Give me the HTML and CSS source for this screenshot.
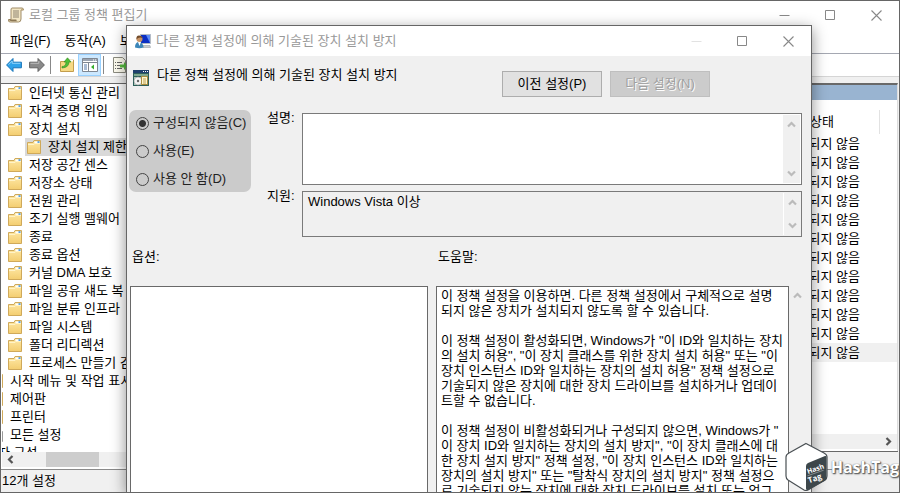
FILE: index.html
```
<!DOCTYPE html>
<html lang="ko">
<head>
    <meta charset="UTF-8">
    <meta name="viewport" content="width=device-width, initial-scale=1.0">
    <title>로컬 그룹 정책 편집기</title>
    <link rel="stylesheet" href="styles.css">
</head>
<body>

<!-- Shared icons -->
<svg class="sprite" width="0" height="0">
    <linearGradient id="folderFill" x1="0" y1="0" x2="0" y2="1">
        <stop offset="0" stop-color="#ffe9a6"/>
        <stop offset="1" stop-color="#f3cd70"/>
    </linearGradient>
    <symbol id="folder" viewBox="0 0 14 14">
        <path d="M.5 13.500V2.500h5.500l1-2h6.500v13z" fill="url(#folderFill)" stroke="#cfa95a"/>
        <path d="M7.500 1.500h5v2h-5z" fill="#fff"/>
        <path d="M10.500 1.300h2v1.500h-2z" fill="#2f8be0"/>
        <path d="M1 4.500h6l1-1h5" fill="none" stroke="#fff3c8"/>
    </symbol>
    <symbol id="min" viewBox="0 0 11 11"><path d="M.5 5.500h10" stroke="currentColor"/></symbol>
    <symbol id="max" viewBox="0 0 11 11"><path d="M.5.5h9v9h-9z" fill="none" stroke="currentColor"/></symbol>
    <symbol id="close" viewBox="0 0 11 11"><path d="M.5.5l10 10M10.500.5l-10 10" stroke="currentColor" stroke-width="1.100"/></symbol>
    <symbol id="up" viewBox="0 0 9 9"><path d="M1 6.500l3.500-3.500 3.500 3.500" fill="none" stroke="currentColor" stroke-width="2.200"/></symbol>
    <symbol id="down" viewBox="0 0 9 9"><path d="M1 2.500l3.500 3.500 3.500-3.500" fill="none" stroke="currentColor" stroke-width="2.200"/></symbol>
    <symbol id="left" viewBox="0 0 9 9"><path d="M6.500 1l-3.500 3.500 3.500 3.500" fill="none" stroke="currentColor" stroke-width="2.200"/></symbol>
    <symbol id="right" viewBox="0 0 9 9"><path d="M2.500 1l3.500 3.500-3.500 3.500" fill="none" stroke="currentColor" stroke-width="2.200"/></symbol>
</svg>

<div class="window">
    <!-- Title bar -->
    <header class="titlebar">
        <svg class="app-icon" viewBox="0 0 16 16">
            <path d="M4 1h10q1.500 0 1.500 2H13v9q0 3-2.500 3H2Q0 15 .5 12.500h2.500V3Q3 1 4 1z" fill="#f2e6c4" stroke="#a08c68"/>
            <path d="M13 3.500V2q1-1.500 2.500 1z" fill="#c3ad80"/>
            <path d="M.8 13q1 1.500 8 1.200l-.5-1.700H.8z" fill="#8a7654"/>
            <path d="M5 4h6M5 6h6M5 8h6M5 10h6" stroke="#8d8371"/>
        </svg>
        <h1>로컬 그룹 정책 편집기</h1>
        <div class="win-buttons">
            <button aria-label="최소화"><svg><use href="#min"/></svg></button>
            <button aria-label="최대화"><svg><use href="#max"/></svg></button>
            <button aria-label="닫기"><svg><use href="#close"/></svg></button>
        </div>
    </header>

    <!-- Menu -->
    <nav class="menubar">
        <button>파일(F)</button>
        <button>동작(A)</button>
        <button>보기</button>
    </nav>

    <!-- Toolbar -->
    <div class="toolbar">
        <button aria-label="뒤로">
            <svg viewBox="0 0 16 16"><path d="M.6 8L7 1.500v3.700h8.400v5.600H7v3.700z" fill="#2fa3ea" stroke="#1874b8"/><path d="M2.500 7.700L6.200 4v2.300h8.200" fill="none" stroke="#90d4fa"/></svg>
        </button>
        <button aria-label="앞으로">
            <svg viewBox="0 0 16 16"><path d="M15.400 8L9 1.500v3.700H.6v5.600H9v3.700z" fill="#8a8a8a" stroke="#626262"/><path d="M1.500 6.300h8.300V4" fill="none" stroke="#bbb"/></svg>
        </button>
        <span class="sep"></span>
        <button aria-label="한 수준 위로">
            <svg viewBox="0 0 16 16"><path d="M1.500 14.500V4.500h6l1-1.500h6v11.500z" fill="#f6d985" stroke="#c39d4c"/><path d="M10 2.500h4v2h-4z" fill="#fff"/><path d="M3 9.500q4 0 4-4.500H5L8.500.8 12 5h-2q0 5.500-7 6z" fill="#4fbd36" stroke="#2f8b20" stroke-width=".6"/></svg>
        </button>
        <button class="active" aria-label="트리 표시">
            <svg viewBox="0 0 16 16"><path d="M.5 1.500h15v13H.5z" fill="#fff" stroke="#7f8792"/><path d="M1 2h14v2H1z" fill="#9aa3b0"/><path d="M11 3h1m1 0h1" stroke="#fff"/><path d="M1 5.500h14M6.500 6v8" stroke="#7f8792"/><path d="M2 8h3M2 10h3M2 12h3" stroke="#5378ab"/><path d="M12 7.500v5L9 10z" fill="#38ae2c"/></svg>
        </button>
        <span class="sep"></span>
        <button aria-label="목록 내보내기">
            <svg viewBox="0 0 16 16"><path d="M1.500.5h9l3 3v12h-12z" fill="#fffdf0" stroke="#8c8c80"/><path d="M3 5.500h1m1 0h5M3 8.500h1m1 0h4M3 11.500h1m1 0h5" stroke="#666"/><path d="M8 7.500h4V5l4 4-4 4v-2.500H8z" fill="#57bd3f"/></svg>
        </button>
    </div>

    <!-- Tree and setting list -->
    <main class="workarea">
        <section class="tree-pane">
            <ul class="tree">
                <li class="l1"><svg><use href="#folder"/></svg>인터넷 통신 관리</li>
                <li class="l1"><svg><use href="#folder"/></svg>자격 증명 위임</li>
                <li class="l1"><svg><use href="#folder"/></svg>장치 설치</li>
                <li class="l2"><span class="selected"><svg><use href="#folder"/></svg>장치 설치 제한</span></li>
                <li class="l1"><svg><use href="#folder"/></svg>저장 공간 센스</li>
                <li class="l1"><svg><use href="#folder"/></svg>저장소 상태</li>
                <li class="l1"><svg><use href="#folder"/></svg>전원 관리</li>
                <li class="l1"><svg><use href="#folder"/></svg>조기 실행 맬웨어</li>
                <li class="l1"><svg><use href="#folder"/></svg>종료</li>
                <li class="l1"><svg><use href="#folder"/></svg>종료 옵션</li>
                <li class="l1"><svg><use href="#folder"/></svg>커널 DMA 보호</li>
                <li class="l1"><svg><use href="#folder"/></svg>파일 공유 섀도 복</li>
                <li class="l1"><svg><use href="#folder"/></svg>파일 분류 인프라</li>
                <li class="l1"><svg><use href="#folder"/></svg>파일 시스템</li>
                <li class="l1"><svg><use href="#folder"/></svg>폴더 리디렉션</li>
                <li class="l1"><svg><use href="#folder"/></svg>프로세스 만들기 감</li>
                <li class="l0"><svg><use href="#folder"/></svg>시작 메뉴 및 작업 표시</li>
                <li class="l0"><svg><use href="#folder"/></svg>제어판</li>
                <li class="l0"><svg><use href="#folder"/></svg>프린터</li>
                <li class="l0"><svg viewBox="0 0 14 14"><path d="M4.500 3.500h9v10h-9z" fill="#fff" stroke="#999"/><path d="M6 6.500h7M6 8.500h7M6 10.500h7" stroke="#999"/></svg>모든 설정</li>
                <li>사용자 구성</li>
            </ul>
            <div class="hscroll">
                <svg><use href="#left"/></svg>
                <span class="thumb"></span>
            </div>
        </section>

        <section class="list-pane">
            <div class="list-box">
                <div class="list-banner"></div>
                <table class="settings">
                    <thead>
                        <tr><th>상태</th></tr>
                    </thead>
                    <tbody>
                        <tr><td>구성되지 않음</td></tr>
                        <tr><td>구성되지 않음</td></tr>
                        <tr><td>구성되지 않음</td></tr>
                        <tr><td>구성되지 않음</td></tr>
                        <tr><td>구성되지 않음</td></tr>
                        <tr><td>구성되지 않음</td></tr>
                        <tr><td>구성되지 않음</td></tr>
                        <tr><td>구성되지 않음</td></tr>
                        <tr><td>구성되지 않음</td></tr>
                        <tr><td>구성되지 않음</td></tr>
                        <tr><td>구성되지 않음</td></tr>
                        <tr class="current"><td>구성되지 않음</td></tr>
                    </tbody>
                </table>
                <div class="hscroll end"><svg><use href="#right"/></svg></div>
            </div>
            <div class="tabs"></div>
        </section>
    </main>

    <footer class="statusbar">12개 설정</footer>

    <!-- Policy dialog -->
    <div class="dialog" role="dialog" aria-labelledby="dialogTitle">
        <header class="titlebar dialog-titlebar">
            <svg class="app-icon" viewBox="0 0 16 16">
                <path d="M5.500 1.500h10v9h-10z" fill="#0b2fc4" stroke="#b5bcc4"/>
                <path d="M11 2h4v8z" fill="#5c8cf4"/>
                <path d="M8 12.500h7l.5 2H8z" fill="#c6cbd0" stroke="#8d949b" stroke-width=".5"/>
                <path d="M0 14.500Q0 9 4 9t4.500 5.500q-4 1.500-8.500 0z" fill="#3c86b8"/>
                <path d="M3 9l1.500 4L6 9z" fill="#fff"/>
                <circle cx="4.500" cy="6" r="3" fill="#c99467"/>
                <path d="M1.500 6.500Q1 2.500 4 2.500T7.500 5Q5 4 3 5z" fill="#714a29"/>
            </svg>
            <h2 id="dialogTitle">다른 정책 설정에 의해 기술된 장치 설치 방지</h2>
            <div class="win-buttons">
                <button disabled aria-label="최소화"><svg><use href="#min"/></svg></button>
                <button aria-label="최대화"><svg><use href="#max"/></svg></button>
                <button aria-label="닫기"><svg><use href="#close"/></svg></button>
            </div>
        </header>

        <div class="dialog-head">
            <svg class="app-icon" viewBox="0 0 16 16">
                <path d="M0 0h16v16H0z" fill="#2d5f5a"/>
                <path d="M0 0h16v3H0z" fill="#1e3f6b"/>
                <path d="M10 1.500h1m1 0h1m1 0h1" stroke="#fff"/>
                <path d="M1 4h14v2H1z" fill="#7fa88e"/>
                <path d="M1 7h8v8H1z" fill="#a9cbb9"/>
                <circle cx="5" cy="11" r="4" fill="#f4f4f4" stroke="#999" stroke-width=".6"/>
                <circle cx="5" cy="11" r="1.200" fill="#666"/>
                <path d="M8.500 6.500h6v8h-6z" fill="#fff6cb" stroke="#a98c3d"/>
                <path d="M10 9h3M10 11h3M10 13h3" stroke="#a98c3d" stroke-width=".8"/>
            </svg>
            <p>다른 정책 설정에 의해 기술된 장치 설치 방지</p>
            <div class="nav-buttons">
                <button type="button">이전 설정(P)</button>
                <button type="button" disabled>다음 설정(N)</button>
            </div>
        </div>

        <form class="policy">
            <div class="states">
                <label><input type="radio" name="state" checked>구성되지 않음(C)</label>
                <label><input type="radio" name="state">사용(E)</label>
                <label><input type="radio" name="state">사용 안 함(D)</label>
            </div>
            <div class="fields">
                <label for="comment">설명:</label>
                <div class="box comment-box">
                    <textarea id="comment"></textarea>
                    <div class="vscroll"><svg><use href="#up"/></svg><svg><use href="#down"/></svg></div>
                </div>
                <label for="supported">지원:</label>
                <div class="box supported-box">
                    <textarea id="supported" readonly>Windows Vista 이상</textarea>
                    <div class="vscroll"><svg><use href="#up"/></svg><svg><use href="#down"/></svg></div>
                </div>
            </div>
        </form>

        <div class="details">
            <section class="options">
                <h3>옵션:</h3>
                <div class="panel"></div>
            </section>
            <section class="help">
                <label for="helpText">도움말:</label>
                <div class="help-row">
                    <textarea id="helpText" class="panel" readonly>이 정책 설정을 이용하면. 다른 정책 설정에서 구체적으로 설명
되지 않은 장치가 설치되지 않도록 할 수 있습니다.

이 정책 설정이 활성화되면, Windows가 "이 ID와 일치하는 장치
의 설치 허용", "이 장치 클래스를 위한 장치 설치 허용" 또는 "이
장치 인스턴스 ID와 일치하는 장치의 설치 허용" 정책 설정으로
기술되지 않은 장치에 대한 장치 드라이브를 설치하거나 업데이
트할 수 없습니다.

이 정책 설정이 비활성화되거나 구성되지 않으면, Windows가 "
이 장치 ID와 일치하는 장치의 설치 방지", "이 장치 클래스에 대
한 장치 설지 방지" 정책 설정, "이 장치 인스턴스 ID와 일치하는
장치의 설치 방지" 또는 "탈착식 장치의 설치 방지" 정책 설정으
로 기술되지 않는 장치에 대한 장치 드라이브를 설치 또는 업그</textarea>
                    <div class="vscroll"><svg><use href="#up"/></svg></div>
                </div>
            </section>
        </div>
    </div>

    <!-- Watermark -->
    <div class="watermark">
        <svg viewBox="0 0 44 50">
            <path d="M21 1.500l18 9.500q3 1.500 3 4v19q0 2.500-2 4L23 48q-2 1-4 0L3 38q-2-1.500-2-4V15q0-2.500 3-4z" fill="#fff" stroke="#4a5054" stroke-width="1.200"/>
            <path d="M21 24q0-2 2-3l17-7q1.500-.5 1.500 1.500V36q0 2-2 3L23 48q-2 .5-2-1.500z" fill="#3d474b"/>
            <g fill="#fff" font-weight="bold" font-size="7" transform="rotate(-19 23 32)">
                <text x="23" y="32">Hash</text>
                <path d="M22 33.500h17" stroke="#aab0b3" stroke-width=".6"/>
                <text x="21" y="41" font-size="8">Tag</text>
            </g>
        </svg>
        <span>HashTag</span>
    </div>
</div>

</body>
</html>
```
FILE: styles.css
```
* {
    box-sizing: border-box;
}
body {
    margin: 0;
    font-family: "Liberation Sans", "Noto Sans CJK KR", sans-serif;
    font-size: 13px;
    line-height: 18px;
    color: #000;
}
h1, h2, h3, p, ul {
    margin: 0;
    padding: 0;
    font-size: 13px;
    font-weight: normal;
}
button, textarea {
    font: inherit;
    color: inherit;
}
.sprite {
    position: absolute;
}
.window {
    position: relative;
    display: flex;
    flex-direction: column;
    height: 100vh;
    overflow: hidden;
    background: #fff;
    border: 1px solid #666;
}

/* Title bars */
.titlebar {
    display: flex;
    align-items: center;
    height: 28px;
    padding-left: 7px;
    color: #999;
    background: #fff;
}
.app-icon {
    flex: none;
    width: 16px;
    height: 16px;
    margin-right: 5px;
}
.win-buttons {
    display: flex;
    margin-left: auto;
}
.win-buttons button {
    display: flex;
    align-items: center;
    justify-content: center;
    width: 46px;
    height: 28px;
    padding: 0;
    border: none;
    background: none;
    color: #888;
}
.win-buttons button:disabled {
    color: #e2e2e2;
}
.win-buttons svg {
    width: 11px;
    height: 11px;
}

/* Menu and toolbar */
.menubar {
    display: flex;
    align-items: center;
    gap: 14px;
    height: 25px;
    padding-left: 9px;
    border-bottom: 1px solid #a5a8b2;
}
.menubar button {
    padding: 0;
    border: none;
    background: none;
}
.toolbar {
    display: flex;
    align-items: center;
    height: 23px;
    padding-left: 1px;
    border-bottom: 1px solid #d5d5d5;
}
.toolbar button {
    display: flex;
    align-items: center;
    justify-content: center;
    width: 23px;
    height: 22px;
    padding: 0;
    border: 1px solid transparent;
    background: none;
}
.toolbar button.active {
    background: #cce8ff;
    border-color: #99d1ff;
}
.toolbar svg {
    flex: none;
    width: 16px;
    height: 16px;
}
.sep {
    width: 1px;
    height: 18px;
    margin: 0 4px 0 2px;
    background: #888;
}

/* Work area */
.workarea {
    display: flex;
    flex: 1;
    min-height: 0;
    padding-top: 6px;
    background: #f0f0f0;
}
.tree-pane {
    display: flex;
    flex-direction: column;
    width: 200px;
    padding: 0 0 2px 1px;
    border-top: 1px solid #696969;
    background: #fff;
}
.tree {
    flex: 1;
    min-height: 0;
    overflow: hidden;
    list-style: none;
}
.tree li {
    display: flex;
    align-items: center;
    height: 18px;
    margin-left: -28px;
    white-space: nowrap;
}
.tree svg {
    flex: none;
    width: 14px;
    height: 14px;
    margin-right: 7px;
}
.tree .l0 {
    padding-left: 15px;
}
.tree .l1 {
    padding-left: 34px;
}
.tree .l2 {
    padding-left: 51px;
}
.selected {
    display: flex;
    align-items: center;
    height: 18px;
    padding: 0 4px 0 2px;
    background: #d9d9d9;
}
.hscroll {
    display: flex;
    align-items: center;
    flex: none;
    height: 15px;
    padding: 0 4px;
    background: #f0f0f0;
    color: #555;
}
.hscroll svg {
    width: 9px;
    height: 9px;
}
.hscroll.end {
    justify-content: flex-end;
    margin-top: auto;
    margin-bottom: 2px;
}
.thumb {
    width: 53px;
    height: 15px;
    margin-left: 31px;
    background: #cdcdcd;
}
.list-pane {
    display: flex;
    flex-direction: column;
    flex: 1;
    margin-left: 4px;
    padding-right: 1px;
}
.list-box {
    display: flex;
    flex-direction: column;
    flex: 1;
    border-top: 2px solid #696969;
    border-right: 1px solid #ddd;
    background: #fff;
}
.list-banner {
    height: 15px;
    margin-bottom: 10px;
    background: #99b4d1;
}
.settings {
    width: 100%;
    border-collapse: collapse;
}
.settings th, .settings td {
    height: 19px;
    padding: 0 37px 0 0;
    font-weight: normal;
    line-height: 18px;
    text-align: right;
}
.settings th {
    height: 24px;
    padding-right: 63px;
    background: linear-gradient(#e2e2e2, #e2e2e2) right 17px top / 1px 100% no-repeat;
}
.settings .current {
    background: #f0f0f0;
}
.tabs {
    height: 18px;
    border-top: 1px solid #696969;
}
.statusbar {
    height: 23px;
    padding: 2px 1px;
    border-top: 1px solid #8a8a8a;
    background: #f0f0f0;
}

/* Dialog */
.dialog {
    position: absolute;
    top: 24px;
    right: 87px;
    bottom: 0;
    left: 125px;
    display: flex;
    flex-direction: column;
    background: #f0f0f0;
    border: 1px solid #666;
    border-bottom: none;
    box-shadow: 0 4px 14px rgba(0, 0, 0, 0.45);
}
.dialog-titlebar {
    height: 30px;
    padding-left: 8px;
}
.dialog-head {
    display: flex;
    height: 54px;
    padding: 10px 101px 0 6px;
}
.dialog-head .app-icon {
    margin-top: 4px;
    margin-right: 8px;
}
.nav-buttons {
    display: flex;
    gap: 8px;
    margin: 5px 0 0 auto;
}
.nav-buttons button {
    width: 100px;
    height: 26px;
    padding: 0;
    border: 1px solid #adadad;
    background: #e1e1e1;
}
.nav-buttons button:disabled {
    border-color: #bfbfbf;
    background: #ccc;
    color: #a0a0a0;
    text-shadow: 1px 1px #fff;
}
.policy {
    display: flex;
    align-items: flex-start;
    gap: 16px;
    padding: 0 9px 0 2px;
}
.states {
    display: flex;
    flex-direction: column;
    gap: 10px;
    width: 122px;
    padding: 4px 0 4px 7px;
    border-radius: 7px;
    background: #cbcbcb;
    white-space: nowrap;
}
.states label {
    display: flex;
    align-items: center;
    gap: 4px;
    height: 18px;
    color: #222;
}
.states input {
    appearance: none;
    flex: none;
    width: 13px;
    height: 13px;
    margin: 0;
    border: 1px solid #444;
    border-radius: 50%;
}
.states input:checked {
    background: radial-gradient(circle, #333 3px, transparent 4px);
}
.fields {
    display: grid;
    grid-template-columns: 35px 1fr;
    row-gap: 6px;
    flex: 1;
    padding-top: 3px;
}
.fields label {
    margin-top: -4px;
}
.box {
    display: flex;
    padding: 1px;
    border: 1px solid #7a7a7a;
}
.comment-box {
    height: 72px;
    background: #fff;
}
.supported-box {
    height: 46px;
}
.supported-box .vscroll {
    border-left: 1px solid #fff;
}
textarea {
    display: block;
    flex: 1;
    min-width: 0;
    padding: 0 4px;
    border: none;
    border-radius: 0;
    outline: none;
    resize: none;
    overflow: hidden;
    white-space: pre;
    background: none;
}
.vscroll {
    display: flex;
    flex-direction: column;
    align-items: center;
    justify-content: space-between;
    width: 17px;
    padding: 5px 0;
    background: #f0f0f0;
    color: #bbb;
}
.vscroll svg {
    width: 9px;
    height: 9px;
}
.details {
    display: grid;
    grid-template-columns: 298fr 370fr;
    gap: 8px;
    flex: 1;
    min-height: 0;
    padding: 11px 5px 0 3px;
}
.options, .help {
    display: flex;
    flex-direction: column;
    min-height: 0;
}
.options h3, .help > label {
    height: 38px;
    padding-left: 2px;
}
.panel {
    flex: 1;
    border: 1px solid #696969;
    border-bottom: none;
    background: #fff;
}
.help-row {
    display: flex;
    flex: 1;
    min-height: 0;
}
.help textarea {
    padding-top: 1px;
    line-height: 15px;
}

/* Watermark */
.watermark {
    position: absolute;
    right: 0;
    bottom: 0;
    display: flex;
    align-items: center;
    gap: 2px;
    font-family: "Open Sans", sans-serif;
    font-size: 16px;
    font-weight: bold;
    color: #fff;
    text-shadow: 0 0 1px #555, 1px 1px 1px #666, 1px 1px 2px #777;
}
.watermark svg {
    width: 44px;
    height: 50px;
    text-shadow: none;
}
```
